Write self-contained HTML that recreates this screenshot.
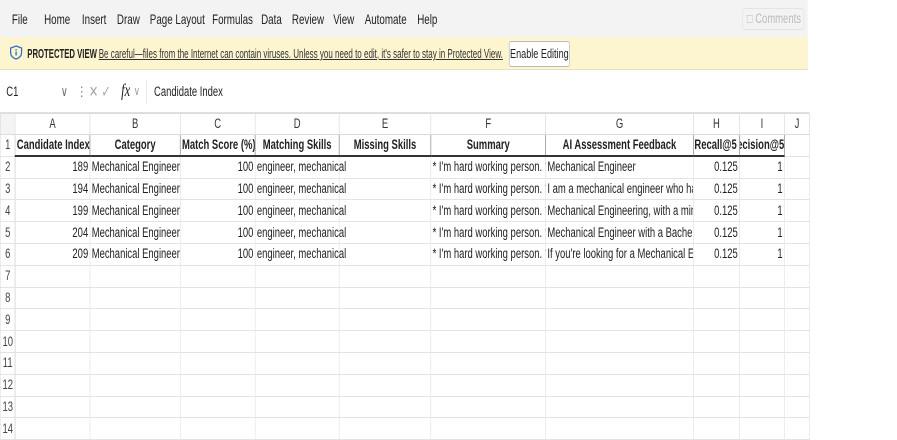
<!DOCTYPE html>
<html><head><meta charset="utf-8"><style>
*{margin:0;padding:0;box-sizing:border-box}
body{width:897px;height:439px;background:#fff;position:relative;overflow:hidden;font-family:"Liberation Sans",sans-serif;font-size:13.5px;color:#222}
#wrap{position:absolute;left:0;top:0;width:1282px;height:439px;transform:scaleX(0.7);transform-origin:0 0}
.abs{position:absolute;white-space:nowrap}
#menu{left:0;top:0;width:1154px;height:37px;background:#f3f3f3}
#menu span{position:absolute;top:11px;font-size:14px;color:#222}
#banner{left:0;top:37px;width:1154px;height:33px;background:#fcf5cf;border-bottom:1px solid #e6e0c0}
#fb{left:0;top:70px;width:1154px;height:40px;background:#fff}
table{position:absolute;left:0;top:113px;border-collapse:collapse;table-layout:fixed;width:1156px}
td{height:21.8px;border:1px solid #e3e3e3;white-space:nowrap;overflow:hidden;padding:0 2px;font-size:13.5px;line-height:20px}
td.ov{overflow:visible;position:relative;z-index:2}
tr.h td{height:20px;background:#fff;text-align:center;color:#333;border-color:#dcdcdc}
td.rh{background:#fff;text-align:center;color:#444;padding:0;border-right:1px solid #ccc}
tr.r1 td{font-weight:bold;text-align:center;border:1px solid #888;border-bottom:2px solid #333}
tr.r1 td.rh{font-weight:normal;border:1px solid #e3e3e3;border-right:1px solid #ccc}
.r{text-align:right}
</style></head><body><div id="wrap">
<div id="menu" class="abs">
<span style="left:17px">File</span><span style="left:63px">Home</span><span style="left:117px">Insert</span><span style="left:167px">Draw</span><span style="left:214px">Page Layout</span><span style="left:303px">Formulas</span><span style="left:373px">Data</span><span style="left:417px">Review</span><span style="left:476px">View</span><span style="left:521px">Automate</span><span style="left:596px">Help</span>
<div class="abs" style="left:1060px;top:8px;width:89px;height:22px;border:1px solid #e4e4e4;border-radius:4px;color:#bbb;font-size:13.5px;line-height:20px;padding-left:6px">&#x25A1; Comments</div>
</div>
<div id="banner" class="abs">
<svg class="abs" style="left:13px;top:8px" width="20" height="15" viewBox="0 0 14 15" preserveAspectRatio="none"><path d="M7 1 L12.5 3 V7.5 C12.5 11 10 13 7 14 C4 13 1.5 11 1.5 7.5 V3 Z" fill="none" stroke="#2b6cc4" stroke-width="1.2"/><path d="M7 6.5V10.5" stroke="#2b6cc4" stroke-width="1.3"/><circle cx="7" cy="4.8" r=".8" fill="#2b6cc4"/></svg>
<span class="abs" style="left:39px;top:9px;font-weight:bold;font-size:13px;transform:scaleX(0.85);transform-origin:0 0">PROTECTED VIEW</span>
<span class="abs" style="left:141px;top:9px;font-size:13px;text-decoration:underline;color:#333;transform:scaleX(0.88);transform-origin:0 0">Be careful—files from the Internet can contain viruses. Unless you need to edit, it's safer to stay in Protected View.</span>
<div class="abs" style="left:727px;top:4px;width:87px;height:26px;background:#fff;border:1px solid #bbb;border-radius:3px;font-size:13px;line-height:24px;text-align:center">Enable Editing</div>
</div>
<div id="fb" class="abs">
<span class="abs" style="left:9px;top:14px;font-size:13.5px">C1</span><span class="abs" style="left:87px;top:14px;color:#666">&#x2228;</span>
<span class="abs" style="left:110px;top:14px;color:#666">&#8942;</span>
<span class="abs" style="left:127px;top:12px;color:#aaa;font-size:16px">&#x2715; &#x2713;</span>
<span class="abs" style="left:173px;top:10px;font-style:italic;font-family:'Liberation Serif',serif;font-size:18px">fx</span><span class="abs" style="left:191px;top:14px;color:#999;font-size:12px">&#x2228;</span>
<div class="abs" style="left:209px;top:10px;width:946px;height:24px;border-left:1px solid #e4e4e4"><span class="abs" style="left:10px;top:4px;font-size:13.5px">Candidate Index</span></div>
</div>
<div class="abs" style="left:0;top:112px;width:1156px;height:1px;background:#e0e0e0"></div>
<table>
<colgroup><col style="width:21px"><col style="width:107px"><col style="width:129px"><col style="width:107px"><col style="width:120px"><col style="width:131px"><col style="width:164px"><col style="width:211px"><col style="width:66px"><col style="width:64px"><col style="width:36px"></colgroup>
<tr class="h"><td class="rh" style="background:#f4f4f4"></td><td>A</td><td>B</td><td>C</td><td>D</td><td>E</td><td>F</td><td>G</td><td>H</td><td>I</td><td>J</td></tr>
<tr class="r1"><td class="rh">1</td><td>Candidate Index</td><td>Category</td><td>Match Score (%)</td><td>Matching Skills</td><td>Missing Skills</td><td>Summary</td><td>AI Assessment Feedback</td><td style="text-align:left;padding:0 1px">Recall@5</td><td style="text-align:left;padding:0;direction:rtl">Precision@5</td><td style="border:1px solid #e3e3e3"></td></tr>
<tr><td class="rh">2</td><td class="r">189</td><td>Mechanical Engineer</td><td class="r">100</td><td class="ov">engineer, mechanical</td><td></td><td>* I'm hard working person. *</td><td>Mechanical Engineer</td><td class="r">0.125</td><td class="r">1</td><td></td></tr>
<tr><td class="rh">3</td><td class="r">194</td><td>Mechanical Engineer</td><td class="r">100</td><td class="ov">engineer, mechanical</td><td></td><td>* I'm hard working person. *</td><td>I am a mechanical engineer who has</td><td class="r">0.125</td><td class="r">1</td><td></td></tr>
<tr><td class="rh">4</td><td class="r">199</td><td>Mechanical Engineer</td><td class="r">100</td><td class="ov">engineer, mechanical</td><td></td><td>* I'm hard working person. *</td><td>Mechanical Engineering, with a minor</td><td class="r">0.125</td><td class="r">1</td><td></td></tr>
<tr><td class="rh">5</td><td class="r">204</td><td>Mechanical Engineer</td><td class="r">100</td><td class="ov">engineer, mechanical</td><td></td><td>* I'm hard working person. *</td><td>Mechanical Engineer with a Bachelor</td><td class="r">0.125</td><td class="r">1</td><td></td></tr>
<tr><td class="rh">6</td><td class="r">209</td><td>Mechanical Engineer</td><td class="r">100</td><td class="ov">engineer, mechanical</td><td></td><td>* I'm hard working person. *</td><td>If you're looking for a Mechanical Engineer</td><td class="r">0.125</td><td class="r">1</td><td></td></tr>
<tr><td class="rh">7</td><td></td><td></td><td></td><td></td><td></td><td></td><td></td><td></td><td></td><td></td></tr>
<tr><td class="rh">8</td><td></td><td></td><td></td><td></td><td></td><td></td><td></td><td></td><td></td><td></td></tr>
<tr><td class="rh">9</td><td></td><td></td><td></td><td></td><td></td><td></td><td></td><td></td><td></td><td></td></tr>
<tr><td class="rh">10</td><td></td><td></td><td></td><td></td><td></td><td></td><td></td><td></td><td></td><td></td></tr>
<tr><td class="rh">11</td><td></td><td></td><td></td><td></td><td></td><td></td><td></td><td></td><td></td><td></td></tr>
<tr><td class="rh">12</td><td></td><td></td><td></td><td></td><td></td><td></td><td></td><td></td><td></td><td></td></tr>
<tr><td class="rh">13</td><td></td><td></td><td></td><td></td><td></td><td></td><td></td><td></td><td></td><td></td></tr>
<tr><td class="rh">14</td><td></td><td></td><td></td><td></td><td></td><td></td><td></td><td></td><td></td><td></td></tr>
</table>
</div></body></html>
